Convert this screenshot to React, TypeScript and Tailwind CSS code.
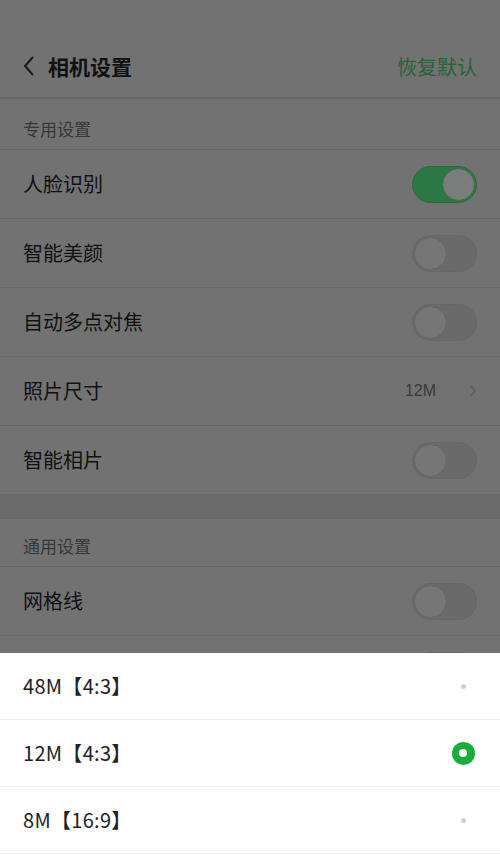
import React from "react";

const font = { fontFamily: '"Noto Sans CJK SC", "Noto Sans", sans-serif' };

function Toggle({ on }: { on?: boolean }) {
  if (on) {
    return (
      <div className="relative h-[37px] w-[65px] rounded-full border border-[#2d6a3c] bg-[#2c7842]">
        <div className="absolute right-[1px] top-[1px] h-[33px] w-[33px] rounded-full border border-[#3f6a4b] bg-[#7a7d7c]" />
      </div>
    );
  }
  return (
    <div className="relative h-[37px] w-[65px] rounded-full border border-[#676767] bg-[#6a6a6a]">
      <div className="absolute left-[1px] top-[1px] h-[33px] w-[33px] rounded-full border border-[#666] bg-[#767676]" />
    </div>
  );
}

function Row({ label, children }: { label: string; children?: React.ReactNode }) {
  return (
    <div className="flex h-[69px] items-center justify-between border-b border-[#686868] pl-[23px] pr-[23px]">
      <span className="text-[20px] text-[#111]">{label}</span>
      {children}
    </div>
  );
}

function SheetRow({ label, selected }: { label: string; selected?: boolean }) {
  return (
    <div className="flex h-[67px] items-center justify-between border-b border-[#ececec] pl-[23px] pr-[25px]">
      <span className="text-[20px] tracking-[0.3px] text-[#222]">{label}</span>
      <div className="flex h-[24px] w-[24px] items-center justify-center">
        {selected ? (
          <div className="flex h-[23px] w-[23px] items-center justify-center rounded-full bg-[#1aad3a]">
            <div className="h-[8px] w-[8px] rounded-full bg-white" />
          </div>
        ) : (
          <div className="h-[5px] w-[5px] rounded-full bg-[#cfcfcf]" />
        )}
      </div>
    </div>
  );
}

export default function App() {
  return (
    <div className="relative h-[866px] w-[500px] overflow-hidden bg-[#727272]" style={font}>
      {/* header */}
      <div className="flex h-[99px] items-end border-b-2 border-[#676767] pb-[15px] pl-[22px] pr-[23px]">
        <div className="flex flex-1 items-center">
          <svg width="14" height="22" viewBox="0 0 14 22" className="mr-[12px]">
            <path d="M11 2 L3 11 L11 20" fill="none" stroke="#1a1a1a" strokeWidth="2" />
          </svg>
          <span className="text-[21px] font-bold text-[#111]">相机设置</span>
        </div>
        <span className="text-[20px] text-[#276339]">恢复默认</span>
      </div>

      <div className="flex h-[51px] items-end border-b border-[#686868] pb-[8px] pl-[23px]">
        <span className="text-[17px] text-[#373737]">专用设置</span>
      </div>
      <Row label="人脸识别">
        <Toggle on />
      </Row>
      <Row label="智能美颜">
        <Toggle />
      </Row>
      <Row label="自动多点对焦">
        <Toggle />
      </Row>
      <Row label="照片尺寸">
        <div className="flex items-center">
          <span className="text-[16px] text-[#3a3a3a]" style={{ fontFamily: '"Liberation Sans", sans-serif' }}>
            12M
          </span>
          <svg width="8" height="12" viewBox="0 0 8 12" className="ml-[33px] mr-0">
            <path d="M2 1 L6 6 L2 11" fill="none" stroke="#5e5e5e" strokeWidth="1.3" />
          </svg>
        </div>
      </Row>
      <Row label="智能相片">
        <Toggle />
      </Row>
      <div className="h-[24px] border-b border-[#686868] bg-[#6b6b6b]" />
      <div className="flex h-[48px] items-end border-b border-[#686868] pb-[8px] pl-[23px]">
        <span className="text-[17px] text-[#373737]">通用设置</span>
      </div>
      <Row label="网格线">
        <Toggle />
      </Row>
      <Row label="">
        <Toggle />
      </Row>

      {/* bottom sheet */}
      <div className="absolute bottom-0 left-0 right-0 h-[213px] bg-white">
        <SheetRow label="48M【4:3】" />
        <SheetRow label="12M【4:3】" selected />
        <SheetRow label="8M【16:9】" />
      </div>
    </div>
  );
}
